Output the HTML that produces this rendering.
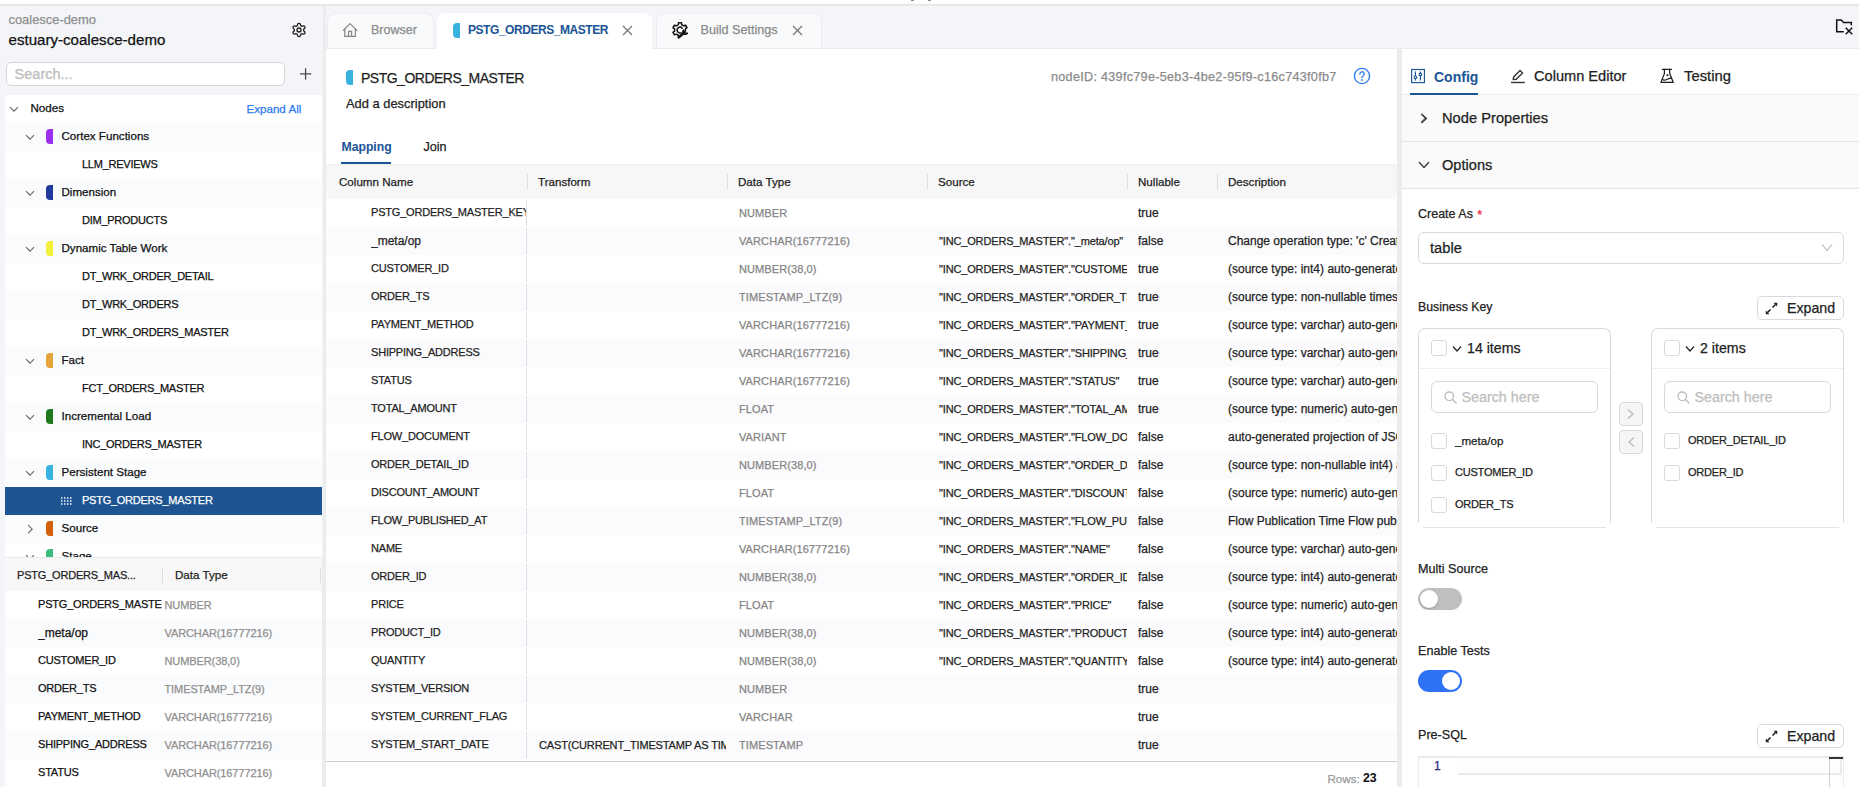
<!DOCTYPE html><html><head><meta charset="utf-8"><style>
*{box-sizing:border-box;margin:0;padding:0}
html,body{width:1859px;height:787px;overflow:hidden}
body{position:relative;background:#f4f5f8;font-family:"Liberation Sans",sans-serif;color:#1f1f1f}
.a{position:absolute}
.t{position:absolute;white-space:nowrap;line-height:1;-webkit-text-stroke:0.25px currentColor}
.clip{overflow:hidden}
svg{display:block}
</style></head><body><div class="a" style="left:0px;top:0px;width:1859px;height:4px;background:#fff"></div>
<div class="a" style="left:0px;top:4px;width:1859px;height:2px;background:linear-gradient(#dfe1e5,#eef0f3)"></div>
<div class="a" style="left:911px;top:0px;width:3px;height:1px;background:#888"></div>
<div class="a" style="left:928px;top:0px;width:3px;height:1px;background:#888"></div>
<div class="t" style="left:8.5px;top:14.08px;font-size:12.9px;color:#8e8e8e;font-weight:400;letter-spacing:0px;">coalesce-demo</div>
<div class="t" style="left:8.5px;top:32.02px;font-size:15.1px;color:#111;font-weight:400;letter-spacing:0px;">estuary-coalesce-demo</div>
<svg class="a" style="left:290.5px;top:22px" width="16" height="16" viewBox="0 0 24 24" fill="none" stroke="#1a1a1a" stroke-width="1.9" stroke-linecap="round" stroke-linejoin="round"><path d="M12.22 2h-.44a2 2 0 0 0-2 2v.18a2 2 0 0 1-1 1.73l-.43.25a2 2 0 0 1-2 0l-.15-.08a2 2 0 0 0-2.73.73l-.22.38a2 2 0 0 0 .73 2.73l.15.1a2 2 0 0 1 1 1.72v.51a2 2 0 0 1-1 1.74l-.15.09a2 2 0 0 0-.73 2.73l.22.38a2 2 0 0 0 2.73.73l.15-.08a2 2 0 0 1 2 0l.43.25a2 2 0 0 1 1 1.73V20a2 2 0 0 0 2 2h.44a2 2 0 0 0 2-2v-.18a2 2 0 0 1 1-1.73l.43-.25a2 2 0 0 1 2 0l.15.08a2 2 0 0 0 2.73-.73l.22-.39a2 2 0 0 0-.73-2.73l-.15-.08a2 2 0 0 1-1-1.74v-.5a2 2 0 0 1 1-1.74l.15-.09a2 2 0 0 0 .73-2.73l-.22-.38a2 2 0 0 0-2.73-.73l-.15.08a2 2 0 0 1-2 0l-.43-.25a2 2 0 0 1-1-1.73V4a2 2 0 0 0-2-2z"/><circle cx="12" cy="12" r="3"/></svg>
<div class="a" style="left:6px;top:62px;width:279px;height:24px;background:#fff;border:1px solid #d3d5d9;border-radius:5px"></div>
<div class="t" style="left:14.6px;top:66.73px;font-size:14.5px;color:#bcbcbc;font-weight:400;letter-spacing:0px;">Search...</div>
<svg class="a" style="left:298px;top:66px" width="15" height="15" viewBox="0 0 15 15"><path d="M7.6 2.3v11.3M2 7.9h11.3" stroke="#4a4a4a" stroke-width="1.3"/></svg>
<div class="a" style="left:5px;top:95px;width:317px;height:462px;background:#fff"></div>
<div class="a clip" style="left:5px;top:95px;width:317px;height:462px">
<div class="a" style="left:0;top:0px;width:317px;height:28px;background:#fff"></div>
<svg class="a" style="left:4px;top:10.5px" width="10" height="7" viewBox="0 0 10 7"><path d="M1 1.2L5 5.2L9 1.2" fill="none" stroke="#666" stroke-width="1.1"/></svg>
<div class="t" style="left:25.5px;top:7.38px;font-size:11.6px;color:#111;font-weight:400;letter-spacing:0px;">Nodes</div>
<div class="t" style="left:241.5px;top:7.98px;font-size:11.6px;color:#2b7af0;font-weight:400;letter-spacing:0px;">Expand All</div>
<div class="a" style="left:0;top:28px;width:317px;height:28px;background:#fafbfd"></div>
<svg class="a" style="left:19.7px;top:39.3px" width="10" height="7" viewBox="0 0 10 7"><path d="M1 1.2L5 5.2L9 1.2" fill="none" stroke="#666" stroke-width="1.1"/></svg>
<div class="a" style="left:41px;top:34px;width:7px;height:15px;background:#9d2ff2;border-radius:4px 0 0 4px"></div>
<div class="t" style="left:56.5px;top:35.38px;font-size:11.6px;color:#111;font-weight:400;letter-spacing:0px;">Cortex Functions</div>
<div class="a" style="left:0;top:56px;width:317px;height:28px;background:#fff"></div>
<div class="t" style="left:77px;top:63.89px;font-size:11px;color:#111;font-weight:400;letter-spacing:-0.25px;">LLM_REVIEWS</div>
<div class="a" style="left:0;top:84px;width:317px;height:28px;background:#fafbfd"></div>
<svg class="a" style="left:19.7px;top:95.3px" width="10" height="7" viewBox="0 0 10 7"><path d="M1 1.2L5 5.2L9 1.2" fill="none" stroke="#666" stroke-width="1.1"/></svg>
<div class="a" style="left:41px;top:90px;width:7px;height:15px;background:#1f3a9a;border-radius:4px 0 0 4px"></div>
<div class="t" style="left:56.5px;top:91.38px;font-size:11.6px;color:#111;font-weight:400;letter-spacing:0px;">Dimension</div>
<div class="a" style="left:0;top:112px;width:317px;height:28px;background:#fff"></div>
<div class="t" style="left:77px;top:119.89px;font-size:11px;color:#111;font-weight:400;letter-spacing:-0.25px;">DIM_PRODUCTS</div>
<div class="a" style="left:0;top:140px;width:317px;height:28px;background:#fafbfd"></div>
<svg class="a" style="left:19.7px;top:151.3px" width="10" height="7" viewBox="0 0 10 7"><path d="M1 1.2L5 5.2L9 1.2" fill="none" stroke="#666" stroke-width="1.1"/></svg>
<div class="a" style="left:41px;top:146px;width:7px;height:15px;background:#f2f23a;border-radius:4px 0 0 4px"></div>
<div class="t" style="left:56.5px;top:147.38px;font-size:11.6px;color:#111;font-weight:400;letter-spacing:0px;">Dynamic Table Work</div>
<div class="a" style="left:0;top:168px;width:317px;height:28px;background:#fff"></div>
<div class="t" style="left:77px;top:175.89px;font-size:11px;color:#111;font-weight:400;letter-spacing:-0.25px;">DT_WRK_ORDER_DETAIL</div>
<div class="a" style="left:0;top:196px;width:317px;height:28px;background:#fafbfd"></div>
<div class="t" style="left:77px;top:203.89px;font-size:11px;color:#111;font-weight:400;letter-spacing:-0.25px;">DT_WRK_ORDERS</div>
<div class="a" style="left:0;top:224px;width:317px;height:28px;background:#fff"></div>
<div class="t" style="left:77px;top:231.89px;font-size:11px;color:#111;font-weight:400;letter-spacing:-0.25px;">DT_WRK_ORDERS_MASTER</div>
<div class="a" style="left:0;top:252px;width:317px;height:28px;background:#fafbfd"></div>
<svg class="a" style="left:19.7px;top:263.3px" width="10" height="7" viewBox="0 0 10 7"><path d="M1 1.2L5 5.2L9 1.2" fill="none" stroke="#666" stroke-width="1.1"/></svg>
<div class="a" style="left:41px;top:258px;width:7px;height:15px;background:#e3a53a;border-radius:4px 0 0 4px"></div>
<div class="t" style="left:56.5px;top:259.38px;font-size:11.6px;color:#111;font-weight:400;letter-spacing:0px;">Fact</div>
<div class="a" style="left:0;top:280px;width:317px;height:28px;background:#fff"></div>
<div class="t" style="left:77px;top:287.89px;font-size:11px;color:#111;font-weight:400;letter-spacing:-0.25px;">FCT_ORDERS_MASTER</div>
<div class="a" style="left:0;top:308px;width:317px;height:28px;background:#fafbfd"></div>
<svg class="a" style="left:19.7px;top:319.3px" width="10" height="7" viewBox="0 0 10 7"><path d="M1 1.2L5 5.2L9 1.2" fill="none" stroke="#666" stroke-width="1.1"/></svg>
<div class="a" style="left:41px;top:314px;width:7px;height:15px;background:#1f7a1f;border-radius:4px 0 0 4px"></div>
<div class="t" style="left:56.5px;top:315.38px;font-size:11.6px;color:#111;font-weight:400;letter-spacing:0px;">Incremental Load</div>
<div class="a" style="left:0;top:336px;width:317px;height:28px;background:#fff"></div>
<div class="t" style="left:77px;top:343.89px;font-size:11px;color:#111;font-weight:400;letter-spacing:-0.25px;">INC_ORDERS_MASTER</div>
<div class="a" style="left:0;top:364px;width:317px;height:28px;background:#fafbfd"></div>
<svg class="a" style="left:19.7px;top:375.3px" width="10" height="7" viewBox="0 0 10 7"><path d="M1 1.2L5 5.2L9 1.2" fill="none" stroke="#666" stroke-width="1.1"/></svg>
<div class="a" style="left:41px;top:370px;width:7px;height:15px;background:#38b3e0;border-radius:4px 0 0 4px"></div>
<div class="t" style="left:56.5px;top:371.38px;font-size:11.6px;color:#111;font-weight:400;letter-spacing:0px;">Persistent Stage</div>
<div class="a" style="left:0;top:392px;width:317px;height:28px;background:#1f5492"></div>
<svg class="a" style="left:56px;top:401px" width="20" height="12" viewBox="0 0 20 12"><rect x="0.2" y="1" width="1.2" height="2" rx=".5" fill="#fff"/><rect x="0.2" y="4" width="1.2" height="2" rx=".5" fill="#fff"/><rect x="0.2" y="7" width="1.2" height="2" rx=".5" fill="#fff"/><rect x="3.2" y="1" width="1.2" height="2" rx=".5" fill="#fff"/><rect x="3.2" y="4" width="1.2" height="2" rx=".5" fill="#fff"/><rect x="3.2" y="7" width="1.2" height="2" rx=".5" fill="#fff"/><rect x="6.2" y="1" width="1.2" height="2" rx=".5" fill="#fff"/><rect x="6.2" y="4" width="1.2" height="2" rx=".5" fill="#fff"/><rect x="6.2" y="7" width="1.2" height="2" rx=".5" fill="#fff"/><rect x="9.2" y="1" width="1.2" height="2" rx=".5" fill="#fff"/><rect x="9.2" y="4" width="1.2" height="2" rx=".5" fill="#fff"/><rect x="9.2" y="7" width="1.2" height="2" rx=".5" fill="#fff"/></svg>
<div class="t" style="left:77px;top:399.89px;font-size:11px;color:#fff;font-weight:400;letter-spacing:-0.25px;">PSTG_ORDERS_MASTER</div>
<div class="a" style="left:0;top:420px;width:317px;height:28px;background:#fafbfd"></div>
<svg class="a" style="left:21.5px;top:429px" width="7" height="11" viewBox="0 0 7 11"><path d="M1.2 1.2L5.2 5.2L1.2 9.2" fill="none" stroke="#666" stroke-width="1.1"/></svg>
<div class="a" style="left:41px;top:426px;width:7px;height:15px;background:#d4600a;border-radius:4px 0 0 4px"></div>
<div class="t" style="left:56.5px;top:427.38px;font-size:11.6px;color:#111;font-weight:400;letter-spacing:0px;">Source</div>
<div class="a" style="left:0;top:448px;width:317px;height:28px;background:#fff"></div>
<svg class="a" style="left:19.7px;top:459.3px" width="10" height="7" viewBox="0 0 10 7"><path d="M1 1.2L5 5.2L9 1.2" fill="none" stroke="#666" stroke-width="1.1"/></svg>
<div class="a" style="left:41px;top:454px;width:7px;height:15px;background:#3dba7c;border-radius:4px 0 0 4px"></div>
<div class="t" style="left:56.5px;top:455.38px;font-size:11.6px;color:#111;font-weight:400;letter-spacing:0px;">Stage</div>
</div>
<div class="a" style="left:5px;top:557px;width:317px;height:230px;background:#fff"></div>
<div class="a" style="left:5px;top:557px;width:317px;height:1px;background:#e9eaed"></div>
<div class="a" style="left:5px;top:558px;width:317px;height:33px;background:#f7f7f8"></div>
<div class="a" style="left:162px;top:568px;width:1px;height:15px;background:#dcdcdc"></div>
<div class="a" style="left:320px;top:568px;width:1px;height:15px;background:#dcdcdc"></div>
<div class="t" style="left:17px;top:569.99px;font-size:11px;color:#1f1f1f;font-weight:400;letter-spacing:-0.2px;">PSTG_ORDERS_MAS...</div>
<div class="t" style="left:175px;top:569.48px;font-size:11.6px;color:#1f1f1f;font-weight:400;letter-spacing:0px;">Data Type</div>
<div class="a" style="left:322px;top:557px;width:5px;height:230px;background:#ebebeb"></div>
<div class="a clip" style="left:38px;top:591px;width:124px;height:28px">
<div class="t" style="left:0px;top:7.89px;font-size:11px;color:#111;font-weight:400;letter-spacing:-0.2px;">PSTG_ORDERS_MASTER_KEY</div>
</div>
<div class="t" style="left:164.5px;top:599.69px;font-size:11px;color:#8f8f8f;font-weight:400;letter-spacing:-0.1px;">NUMBER</div>
<div class="a" style="left:5px;top:619px;width:317px;height:28px;background:#fafbfd"></div>
<div class="a clip" style="left:38px;top:619px;width:124px;height:28px">
<div class="t" style="left:0px;top:7.84px;font-size:12px;color:#111;font-weight:400;letter-spacing:0px;">_meta/op</div>
</div>
<div class="t" style="left:164.5px;top:627.69px;font-size:11px;color:#8f8f8f;font-weight:400;letter-spacing:-0.1px;">VARCHAR(16777216)</div>
<div class="a clip" style="left:38px;top:647px;width:124px;height:28px">
<div class="t" style="left:0px;top:7.89px;font-size:11px;color:#111;font-weight:400;letter-spacing:-0.2px;">CUSTOMER_ID</div>
</div>
<div class="t" style="left:164.5px;top:655.69px;font-size:11px;color:#8f8f8f;font-weight:400;letter-spacing:-0.1px;">NUMBER(38,0)</div>
<div class="a" style="left:5px;top:675px;width:317px;height:28px;background:#fafbfd"></div>
<div class="a clip" style="left:38px;top:675px;width:124px;height:28px">
<div class="t" style="left:0px;top:7.89px;font-size:11px;color:#111;font-weight:400;letter-spacing:-0.2px;">ORDER_TS</div>
</div>
<div class="t" style="left:164.5px;top:683.69px;font-size:11px;color:#8f8f8f;font-weight:400;letter-spacing:-0.1px;">TIMESTAMP_LTZ(9)</div>
<div class="a clip" style="left:38px;top:703px;width:124px;height:28px">
<div class="t" style="left:0px;top:7.89px;font-size:11px;color:#111;font-weight:400;letter-spacing:-0.2px;">PAYMENT_METHOD</div>
</div>
<div class="t" style="left:164.5px;top:711.69px;font-size:11px;color:#8f8f8f;font-weight:400;letter-spacing:-0.1px;">VARCHAR(16777216)</div>
<div class="a" style="left:5px;top:731px;width:317px;height:28px;background:#fafbfd"></div>
<div class="a clip" style="left:38px;top:731px;width:124px;height:28px">
<div class="t" style="left:0px;top:7.89px;font-size:11px;color:#111;font-weight:400;letter-spacing:-0.2px;">SHIPPING_ADDRESS</div>
</div>
<div class="t" style="left:164.5px;top:739.69px;font-size:11px;color:#8f8f8f;font-weight:400;letter-spacing:-0.1px;">VARCHAR(16777216)</div>
<div class="a clip" style="left:38px;top:759px;width:124px;height:28px">
<div class="t" style="left:0px;top:7.89px;font-size:11px;color:#111;font-weight:400;letter-spacing:-0.2px;">STATUS</div>
</div>
<div class="t" style="left:164.5px;top:767.69px;font-size:11px;color:#8f8f8f;font-weight:400;letter-spacing:-0.1px;">VARCHAR(16777216)</div>
<div class="a" style="left:323px;top:6px;width:3px;height:781px;background:#ececec"></div>
<div class="a" style="left:326px;top:48px;width:1533px;height:1px;background:#ebebeb"></div>
<div class="a" style="left:327px;top:13px;width:107px;height:35px;background:#f9fafb;border:1px solid #eceef1;border-bottom:none;border-radius:8px 8px 0 0"></div>
<svg class="a" style="left:335px;top:15px" width="30" height="30" viewBox="0 0 30 30" fill="none" stroke="#8a8a8a" stroke-width="1.3" stroke-linecap="round" stroke-linejoin="round"><path d="M8.3 15.4L15.1 8.6L21.9 15.4"/><path d="M9.8 14v7.4h10.6V14"/><path d="M13.6 21.4v-5h3v5"/></svg>
<div class="t" style="left:371px;top:24.42px;font-size:12.5px;color:#8a8a8a;font-weight:400;letter-spacing:0px;">Browser</div>
<div class="a" style="left:437px;top:13px;width:215px;height:37px;background:#fff;border-radius:8px 8px 0 0"></div>
<div class="a" style="left:453px;top:23px;width:7px;height:15px;background:#38b3e0;border-radius:4px 0 0 4px"></div>
<div class="t" style="left:468px;top:24.04px;font-size:12px;color:#1b5596;font-weight:700;letter-spacing:-0.45px;-webkit-text-stroke:0.05px currentColor;">PSTG_ORDERS_MASTER</div>
<svg class="a" style="left:622px;top:25px" width="11" height="11" viewBox="0 0 11 11"><path d="M1 1l9 9M10 1l-9 9" stroke="#777" stroke-width="1.3"/></svg>
<div class="a" style="left:656px;top:13px;width:166px;height:35px;background:#f9fafb;border:1px solid #eceef1;border-bottom:none;border-radius:8px 8px 0 0"></div>
<svg class="a" style="left:665px;top:15px" width="30" height="30" viewBox="0 0 30 30" fill="none" stroke="#111" stroke-linecap="round" stroke-linejoin="round"><path d="M13.27 9.78L13.53 7.75L16.47 7.75L16.73 9.78L17.75 10.24L18.66 10.89L20.55 10.10L22.02 12.65L20.39 13.89L20.50 15.00L20.39 16.11M13.53 22.25L13.27 20.22L12.25 19.76L11.34 19.11L9.45 19.90L7.98 17.35L9.61 16.11L9.50 15.00L9.61 13.89L7.98 12.65L9.45 10.10L11.34 10.89L12.25 10.24" stroke-width="1.5"/><path d="M17.2 13.2a2.9 2.9 0 1 0-1.2 4.6" stroke-width="1.4"/><path d="M13.8 22.3L19.6 17.2" stroke-width="2.6"/><path d="M18.6 15.2a2.3 2.3 0 0 0 3.6 2.9" stroke-width="1.8"/></svg>
<div class="t" style="left:700.5px;top:24.33px;font-size:12.6px;color:#8a8a8a;font-weight:400;letter-spacing:0px;">Build Settings</div>
<svg class="a" style="left:792px;top:25px" width="11" height="11" viewBox="0 0 11 11"><path d="M1 1l9 9M10 1l-9 9" stroke="#777" stroke-width="1.3"/></svg>
<svg class="a" style="left:1835px;top:17px" width="19" height="19" viewBox="0 0 19 19" fill="none" stroke="#111" stroke-width="1.5"><path d="M8.8 14.8H1.7V2.9H6.2L8.6 5.5H16.3V8.3"/><path d="M10.7 10.7L17.2 17.2M17.2 10.7L10.7 17.2"/></svg>
<div class="a" style="left:326px;top:49px;width:1071px;height:738px;background:#fff"></div>
<div class="a" style="left:346px;top:70px;width:7px;height:15px;background:#38b3e0;border-radius:4px 0 0 4px"></div>
<div class="t" style="left:361px;top:71.35px;font-size:14px;color:#1f1f1f;font-weight:400;letter-spacing:-0.5px;">PSTG_ORDERS_MASTER</div>
<div class="t" style="left:346px;top:98.38px;font-size:12.9px;color:#222;font-weight:400;letter-spacing:0px;">Add a description</div>
<div class="t" style="left:1051px;top:71.33px;font-size:12.6px;color:#8a8a8a;font-weight:400;letter-spacing:0.3px;">nodeID: 439fc79e-5eb3-4be2-95f9-c16c743f0fb7</div>
<svg class="a" style="left:1353px;top:67px" width="18" height="18" viewBox="0 0 18 18"><circle cx="9" cy="9" r="7.6" fill="none" stroke="#2e7bf2" stroke-width="1.4"/><path d="M6.8 7a2.2 2.2 0 1 1 3.2 2c-.7.4-1 .8-1 1.6" fill="none" stroke="#2e7bf2" stroke-width="1.4" stroke-linecap="round"/><circle cx="9" cy="13" r=".9" fill="#2e7bf2"/></svg>
<div class="t" style="left:341.5px;top:141.17px;font-size:12.2px;color:#1b5596;font-weight:700;letter-spacing:0px;-webkit-text-stroke:0.05px currentColor;">Mapping</div>
<div class="t" style="left:423.5px;top:140.83px;font-size:12.6px;color:#222;font-weight:400;letter-spacing:0px;">Join</div>
<div class="a" style="left:341px;top:162px;width:50px;height:3px;background:#1b5596"></div>
<div class="a" style="left:326px;top:165px;width:1071px;height:34px;background:#f7f7f8"></div>
<div class="a" style="left:326px;top:164px;width:1071px;height:1px;background:#efefef"></div>
<div class="t" style="left:339px;top:175.98px;font-size:11.6px;color:#1f1f1f;font-weight:400;letter-spacing:0px;">Column Name</div>
<div class="t" style="left:538px;top:175.98px;font-size:11.6px;color:#1f1f1f;font-weight:400;letter-spacing:0px;">Transform</div>
<div class="t" style="left:738px;top:175.98px;font-size:11.6px;color:#1f1f1f;font-weight:400;letter-spacing:0px;">Data Type</div>
<div class="t" style="left:938px;top:175.98px;font-size:11.6px;color:#1f1f1f;font-weight:400;letter-spacing:0px;">Source</div>
<div class="t" style="left:1138px;top:175.98px;font-size:11.6px;color:#1f1f1f;font-weight:400;letter-spacing:0px;">Nullable</div>
<div class="t" style="left:1228px;top:175.98px;font-size:11.6px;color:#1f1f1f;font-weight:400;letter-spacing:0px;">Description</div>
<div class="a" style="left:527px;top:174px;width:1px;height:16px;background:#dedede"></div>
<div class="a" style="left:727px;top:174px;width:1px;height:16px;background:#dedede"></div>
<div class="a" style="left:927px;top:174px;width:1px;height:16px;background:#dedede"></div>
<div class="a" style="left:1127px;top:174px;width:1px;height:16px;background:#dedede"></div>
<div class="a" style="left:1217px;top:174px;width:1px;height:16px;background:#dedede"></div>
<div class="a" style="left:526px;top:200px;width:1px;height:26px;background:#dcdfe3"></div>
<div class="a clip" style="left:371px;top:199px;width:155px;height:28px">
<div class="t" style="left:0px;top:7.89px;font-size:11px;color:#1f1f1f;font-weight:400;letter-spacing:-0.2px;">PSTG_ORDERS_MASTER_KEY</div>
</div>
<div class="a clip" style="left:739px;top:199px;width:188px;height:28px">
<div class="t" style="left:0px;top:8.89px;font-size:11px;color:#858585;font-weight:400;letter-spacing:0.1px;">NUMBER</div>
</div>
<div class="a clip" style="left:1138px;top:199px;width:78px;height:28px">
<div class="t" style="left:0px;top:8.04px;font-size:12px;color:#1f1f1f;font-weight:400;letter-spacing:0px;">true</div>
</div>
<div class="a" style="left:326px;top:227px;width:1071px;height:28px;background:#fbfbfd"></div>
<div class="a" style="left:526px;top:228px;width:1px;height:26px;background:#dcdfe3"></div>
<div class="a clip" style="left:371px;top:227px;width:155px;height:28px">
<div class="t" style="left:0px;top:8.04px;font-size:12px;color:#1f1f1f;font-weight:400;letter-spacing:0px;">_meta/op</div>
</div>
<div class="a clip" style="left:739px;top:227px;width:188px;height:28px">
<div class="t" style="left:0px;top:8.89px;font-size:11px;color:#858585;font-weight:400;letter-spacing:0.1px;">VARCHAR(16777216)</div>
</div>
<div class="a clip" style="left:939px;top:227px;width:188px;height:28px">
<div class="t" style="left:0px;top:8.79px;font-size:11px;color:#1f1f1f;font-weight:400;letter-spacing:-0.15px;">&quot;INC_ORDERS_MASTER&quot;.&quot;_meta/op&quot;</div>
</div>
<div class="a clip" style="left:1138px;top:227px;width:78px;height:28px">
<div class="t" style="left:0px;top:8.04px;font-size:12px;color:#1f1f1f;font-weight:400;letter-spacing:0px;">false</div>
</div>
<div class="a clip" style="left:1228px;top:227px;width:169px;height:28px">
<div class="t" style="left:0px;top:8.04px;font-size:12px;color:#1f1f1f;font-weight:400;letter-spacing:0px;">Change operation type: &#x27;c&#x27; Create, &#x27;u&#x27; Update</div>
</div>
<div class="a" style="left:526px;top:256px;width:1px;height:26px;background:#dcdfe3"></div>
<div class="a clip" style="left:371px;top:255px;width:155px;height:28px">
<div class="t" style="left:0px;top:7.89px;font-size:11px;color:#1f1f1f;font-weight:400;letter-spacing:-0.2px;">CUSTOMER_ID</div>
</div>
<div class="a clip" style="left:739px;top:255px;width:188px;height:28px">
<div class="t" style="left:0px;top:8.89px;font-size:11px;color:#858585;font-weight:400;letter-spacing:0.1px;">NUMBER(38,0)</div>
</div>
<div class="a clip" style="left:939px;top:255px;width:188px;height:28px">
<div class="t" style="left:0px;top:8.79px;font-size:11px;color:#1f1f1f;font-weight:400;letter-spacing:-0.15px;">&quot;INC_ORDERS_MASTER&quot;.&quot;CUSTOMER_ID&quot;</div>
</div>
<div class="a clip" style="left:1138px;top:255px;width:78px;height:28px">
<div class="t" style="left:0px;top:8.04px;font-size:12px;color:#1f1f1f;font-weight:400;letter-spacing:0px;">true</div>
</div>
<div class="a clip" style="left:1228px;top:255px;width:169px;height:28px">
<div class="t" style="left:0px;top:8.04px;font-size:12px;color:#1f1f1f;font-weight:400;letter-spacing:0px;">(source type: int4) auto-generated projection</div>
</div>
<div class="a" style="left:326px;top:283px;width:1071px;height:28px;background:#fbfbfd"></div>
<div class="a" style="left:526px;top:284px;width:1px;height:26px;background:#dcdfe3"></div>
<div class="a clip" style="left:371px;top:283px;width:155px;height:28px">
<div class="t" style="left:0px;top:7.89px;font-size:11px;color:#1f1f1f;font-weight:400;letter-spacing:-0.2px;">ORDER_TS</div>
</div>
<div class="a clip" style="left:739px;top:283px;width:188px;height:28px">
<div class="t" style="left:0px;top:8.89px;font-size:11px;color:#858585;font-weight:400;letter-spacing:0.1px;">TIMESTAMP_LTZ(9)</div>
</div>
<div class="a clip" style="left:939px;top:283px;width:188px;height:28px">
<div class="t" style="left:0px;top:8.79px;font-size:11px;color:#1f1f1f;font-weight:400;letter-spacing:-0.15px;">&quot;INC_ORDERS_MASTER&quot;.&quot;ORDER_TS&quot;</div>
</div>
<div class="a clip" style="left:1138px;top:283px;width:78px;height:28px">
<div class="t" style="left:0px;top:8.04px;font-size:12px;color:#1f1f1f;font-weight:400;letter-spacing:0px;">true</div>
</div>
<div class="a clip" style="left:1228px;top:283px;width:169px;height:28px">
<div class="t" style="left:0px;top:8.04px;font-size:12px;color:#1f1f1f;font-weight:400;letter-spacing:0px;">(source type: non-nullable timestamptz)</div>
</div>
<div class="a" style="left:526px;top:312px;width:1px;height:26px;background:#dcdfe3"></div>
<div class="a clip" style="left:371px;top:311px;width:155px;height:28px">
<div class="t" style="left:0px;top:7.89px;font-size:11px;color:#1f1f1f;font-weight:400;letter-spacing:-0.2px;">PAYMENT_METHOD</div>
</div>
<div class="a clip" style="left:739px;top:311px;width:188px;height:28px">
<div class="t" style="left:0px;top:8.89px;font-size:11px;color:#858585;font-weight:400;letter-spacing:0.1px;">VARCHAR(16777216)</div>
</div>
<div class="a clip" style="left:939px;top:311px;width:188px;height:28px">
<div class="t" style="left:0px;top:8.79px;font-size:11px;color:#1f1f1f;font-weight:400;letter-spacing:-0.15px;">&quot;INC_ORDERS_MASTER&quot;.&quot;PAYMENT_METHOD&quot;</div>
</div>
<div class="a clip" style="left:1138px;top:311px;width:78px;height:28px">
<div class="t" style="left:0px;top:8.04px;font-size:12px;color:#1f1f1f;font-weight:400;letter-spacing:0px;">true</div>
</div>
<div class="a clip" style="left:1228px;top:311px;width:169px;height:28px">
<div class="t" style="left:0px;top:8.04px;font-size:12px;color:#1f1f1f;font-weight:400;letter-spacing:0px;">(source type: varchar) auto-generated</div>
</div>
<div class="a" style="left:326px;top:339px;width:1071px;height:28px;background:#fbfbfd"></div>
<div class="a" style="left:526px;top:340px;width:1px;height:26px;background:#dcdfe3"></div>
<div class="a clip" style="left:371px;top:339px;width:155px;height:28px">
<div class="t" style="left:0px;top:7.89px;font-size:11px;color:#1f1f1f;font-weight:400;letter-spacing:-0.2px;">SHIPPING_ADDRESS</div>
</div>
<div class="a clip" style="left:739px;top:339px;width:188px;height:28px">
<div class="t" style="left:0px;top:8.89px;font-size:11px;color:#858585;font-weight:400;letter-spacing:0.1px;">VARCHAR(16777216)</div>
</div>
<div class="a clip" style="left:939px;top:339px;width:188px;height:28px">
<div class="t" style="left:0px;top:8.79px;font-size:11px;color:#1f1f1f;font-weight:400;letter-spacing:-0.15px;">&quot;INC_ORDERS_MASTER&quot;.&quot;SHIPPING_ADDRESS&quot;</div>
</div>
<div class="a clip" style="left:1138px;top:339px;width:78px;height:28px">
<div class="t" style="left:0px;top:8.04px;font-size:12px;color:#1f1f1f;font-weight:400;letter-spacing:0px;">true</div>
</div>
<div class="a clip" style="left:1228px;top:339px;width:169px;height:28px">
<div class="t" style="left:0px;top:8.04px;font-size:12px;color:#1f1f1f;font-weight:400;letter-spacing:0px;">(source type: varchar) auto-generated</div>
</div>
<div class="a" style="left:526px;top:368px;width:1px;height:26px;background:#dcdfe3"></div>
<div class="a clip" style="left:371px;top:367px;width:155px;height:28px">
<div class="t" style="left:0px;top:7.89px;font-size:11px;color:#1f1f1f;font-weight:400;letter-spacing:-0.2px;">STATUS</div>
</div>
<div class="a clip" style="left:739px;top:367px;width:188px;height:28px">
<div class="t" style="left:0px;top:8.89px;font-size:11px;color:#858585;font-weight:400;letter-spacing:0.1px;">VARCHAR(16777216)</div>
</div>
<div class="a clip" style="left:939px;top:367px;width:188px;height:28px">
<div class="t" style="left:0px;top:8.79px;font-size:11px;color:#1f1f1f;font-weight:400;letter-spacing:-0.15px;">&quot;INC_ORDERS_MASTER&quot;.&quot;STATUS&quot;</div>
</div>
<div class="a clip" style="left:1138px;top:367px;width:78px;height:28px">
<div class="t" style="left:0px;top:8.04px;font-size:12px;color:#1f1f1f;font-weight:400;letter-spacing:0px;">true</div>
</div>
<div class="a clip" style="left:1228px;top:367px;width:169px;height:28px">
<div class="t" style="left:0px;top:8.04px;font-size:12px;color:#1f1f1f;font-weight:400;letter-spacing:0px;">(source type: varchar) auto-generated</div>
</div>
<div class="a" style="left:326px;top:395px;width:1071px;height:28px;background:#fbfbfd"></div>
<div class="a" style="left:526px;top:396px;width:1px;height:26px;background:#dcdfe3"></div>
<div class="a clip" style="left:371px;top:395px;width:155px;height:28px">
<div class="t" style="left:0px;top:7.89px;font-size:11px;color:#1f1f1f;font-weight:400;letter-spacing:-0.2px;">TOTAL_AMOUNT</div>
</div>
<div class="a clip" style="left:739px;top:395px;width:188px;height:28px">
<div class="t" style="left:0px;top:8.89px;font-size:11px;color:#858585;font-weight:400;letter-spacing:0.1px;">FLOAT</div>
</div>
<div class="a clip" style="left:939px;top:395px;width:188px;height:28px">
<div class="t" style="left:0px;top:8.79px;font-size:11px;color:#1f1f1f;font-weight:400;letter-spacing:-0.15px;">&quot;INC_ORDERS_MASTER&quot;.&quot;TOTAL_AMOUNT&quot;</div>
</div>
<div class="a clip" style="left:1138px;top:395px;width:78px;height:28px">
<div class="t" style="left:0px;top:8.04px;font-size:12px;color:#1f1f1f;font-weight:400;letter-spacing:0px;">true</div>
</div>
<div class="a clip" style="left:1228px;top:395px;width:169px;height:28px">
<div class="t" style="left:0px;top:8.04px;font-size:12px;color:#1f1f1f;font-weight:400;letter-spacing:0px;">(source type: numeric) auto-generated</div>
</div>
<div class="a" style="left:526px;top:424px;width:1px;height:26px;background:#dcdfe3"></div>
<div class="a clip" style="left:371px;top:423px;width:155px;height:28px">
<div class="t" style="left:0px;top:7.89px;font-size:11px;color:#1f1f1f;font-weight:400;letter-spacing:-0.2px;">FLOW_DOCUMENT</div>
</div>
<div class="a clip" style="left:739px;top:423px;width:188px;height:28px">
<div class="t" style="left:0px;top:8.89px;font-size:11px;color:#858585;font-weight:400;letter-spacing:0.1px;">VARIANT</div>
</div>
<div class="a clip" style="left:939px;top:423px;width:188px;height:28px">
<div class="t" style="left:0px;top:8.79px;font-size:11px;color:#1f1f1f;font-weight:400;letter-spacing:-0.15px;">&quot;INC_ORDERS_MASTER&quot;.&quot;FLOW_DOCUMENT&quot;</div>
</div>
<div class="a clip" style="left:1138px;top:423px;width:78px;height:28px">
<div class="t" style="left:0px;top:8.04px;font-size:12px;color:#1f1f1f;font-weight:400;letter-spacing:0px;">false</div>
</div>
<div class="a clip" style="left:1228px;top:423px;width:169px;height:28px">
<div class="t" style="left:0px;top:8.04px;font-size:12px;color:#1f1f1f;font-weight:400;letter-spacing:0px;">auto-generated projection of JSON document</div>
</div>
<div class="a" style="left:326px;top:451px;width:1071px;height:28px;background:#fbfbfd"></div>
<div class="a" style="left:526px;top:452px;width:1px;height:26px;background:#dcdfe3"></div>
<div class="a clip" style="left:371px;top:451px;width:155px;height:28px">
<div class="t" style="left:0px;top:7.89px;font-size:11px;color:#1f1f1f;font-weight:400;letter-spacing:-0.2px;">ORDER_DETAIL_ID</div>
</div>
<div class="a clip" style="left:739px;top:451px;width:188px;height:28px">
<div class="t" style="left:0px;top:8.89px;font-size:11px;color:#858585;font-weight:400;letter-spacing:0.1px;">NUMBER(38,0)</div>
</div>
<div class="a clip" style="left:939px;top:451px;width:188px;height:28px">
<div class="t" style="left:0px;top:8.79px;font-size:11px;color:#1f1f1f;font-weight:400;letter-spacing:-0.15px;">&quot;INC_ORDERS_MASTER&quot;.&quot;ORDER_DETAIL_ID&quot;</div>
</div>
<div class="a clip" style="left:1138px;top:451px;width:78px;height:28px">
<div class="t" style="left:0px;top:8.04px;font-size:12px;color:#1f1f1f;font-weight:400;letter-spacing:0px;">false</div>
</div>
<div class="a clip" style="left:1228px;top:451px;width:169px;height:28px">
<div class="t" style="left:0px;top:8.04px;font-size:12px;color:#1f1f1f;font-weight:400;letter-spacing:0px;">(source type: non-nullable int4) auto-generated</div>
</div>
<div class="a" style="left:526px;top:480px;width:1px;height:26px;background:#dcdfe3"></div>
<div class="a clip" style="left:371px;top:479px;width:155px;height:28px">
<div class="t" style="left:0px;top:7.89px;font-size:11px;color:#1f1f1f;font-weight:400;letter-spacing:-0.2px;">DISCOUNT_AMOUNT</div>
</div>
<div class="a clip" style="left:739px;top:479px;width:188px;height:28px">
<div class="t" style="left:0px;top:8.89px;font-size:11px;color:#858585;font-weight:400;letter-spacing:0.1px;">FLOAT</div>
</div>
<div class="a clip" style="left:939px;top:479px;width:188px;height:28px">
<div class="t" style="left:0px;top:8.79px;font-size:11px;color:#1f1f1f;font-weight:400;letter-spacing:-0.15px;">&quot;INC_ORDERS_MASTER&quot;.&quot;DISCOUNT_AMOUNT&quot;</div>
</div>
<div class="a clip" style="left:1138px;top:479px;width:78px;height:28px">
<div class="t" style="left:0px;top:8.04px;font-size:12px;color:#1f1f1f;font-weight:400;letter-spacing:0px;">false</div>
</div>
<div class="a clip" style="left:1228px;top:479px;width:169px;height:28px">
<div class="t" style="left:0px;top:8.04px;font-size:12px;color:#1f1f1f;font-weight:400;letter-spacing:0px;">(source type: numeric) auto-generated</div>
</div>
<div class="a" style="left:326px;top:507px;width:1071px;height:28px;background:#fbfbfd"></div>
<div class="a" style="left:526px;top:508px;width:1px;height:26px;background:#dcdfe3"></div>
<div class="a clip" style="left:371px;top:507px;width:155px;height:28px">
<div class="t" style="left:0px;top:7.89px;font-size:11px;color:#1f1f1f;font-weight:400;letter-spacing:-0.2px;">FLOW_PUBLISHED_AT</div>
</div>
<div class="a clip" style="left:739px;top:507px;width:188px;height:28px">
<div class="t" style="left:0px;top:8.89px;font-size:11px;color:#858585;font-weight:400;letter-spacing:0.1px;">TIMESTAMP_LTZ(9)</div>
</div>
<div class="a clip" style="left:939px;top:507px;width:188px;height:28px">
<div class="t" style="left:0px;top:8.79px;font-size:11px;color:#1f1f1f;font-weight:400;letter-spacing:-0.15px;">&quot;INC_ORDERS_MASTER&quot;.&quot;FLOW_PUBLISHED_AT&quot;</div>
</div>
<div class="a clip" style="left:1138px;top:507px;width:78px;height:28px">
<div class="t" style="left:0px;top:8.04px;font-size:12px;color:#1f1f1f;font-weight:400;letter-spacing:0px;">false</div>
</div>
<div class="a clip" style="left:1228px;top:507px;width:169px;height:28px">
<div class="t" style="left:0px;top:8.04px;font-size:12px;color:#1f1f1f;font-weight:400;letter-spacing:0px;">Flow Publication Time Flow publication time</div>
</div>
<div class="a" style="left:526px;top:536px;width:1px;height:26px;background:#dcdfe3"></div>
<div class="a clip" style="left:371px;top:535px;width:155px;height:28px">
<div class="t" style="left:0px;top:7.89px;font-size:11px;color:#1f1f1f;font-weight:400;letter-spacing:-0.2px;">NAME</div>
</div>
<div class="a clip" style="left:739px;top:535px;width:188px;height:28px">
<div class="t" style="left:0px;top:8.89px;font-size:11px;color:#858585;font-weight:400;letter-spacing:0.1px;">VARCHAR(16777216)</div>
</div>
<div class="a clip" style="left:939px;top:535px;width:188px;height:28px">
<div class="t" style="left:0px;top:8.79px;font-size:11px;color:#1f1f1f;font-weight:400;letter-spacing:-0.15px;">&quot;INC_ORDERS_MASTER&quot;.&quot;NAME&quot;</div>
</div>
<div class="a clip" style="left:1138px;top:535px;width:78px;height:28px">
<div class="t" style="left:0px;top:8.04px;font-size:12px;color:#1f1f1f;font-weight:400;letter-spacing:0px;">false</div>
</div>
<div class="a clip" style="left:1228px;top:535px;width:169px;height:28px">
<div class="t" style="left:0px;top:8.04px;font-size:12px;color:#1f1f1f;font-weight:400;letter-spacing:0px;">(source type: varchar) auto-generated</div>
</div>
<div class="a" style="left:326px;top:563px;width:1071px;height:28px;background:#fbfbfd"></div>
<div class="a" style="left:526px;top:564px;width:1px;height:26px;background:#dcdfe3"></div>
<div class="a clip" style="left:371px;top:563px;width:155px;height:28px">
<div class="t" style="left:0px;top:7.89px;font-size:11px;color:#1f1f1f;font-weight:400;letter-spacing:-0.2px;">ORDER_ID</div>
</div>
<div class="a clip" style="left:739px;top:563px;width:188px;height:28px">
<div class="t" style="left:0px;top:8.89px;font-size:11px;color:#858585;font-weight:400;letter-spacing:0.1px;">NUMBER(38,0)</div>
</div>
<div class="a clip" style="left:939px;top:563px;width:188px;height:28px">
<div class="t" style="left:0px;top:8.79px;font-size:11px;color:#1f1f1f;font-weight:400;letter-spacing:-0.15px;">&quot;INC_ORDERS_MASTER&quot;.&quot;ORDER_ID&quot;</div>
</div>
<div class="a clip" style="left:1138px;top:563px;width:78px;height:28px">
<div class="t" style="left:0px;top:8.04px;font-size:12px;color:#1f1f1f;font-weight:400;letter-spacing:0px;">false</div>
</div>
<div class="a clip" style="left:1228px;top:563px;width:169px;height:28px">
<div class="t" style="left:0px;top:8.04px;font-size:12px;color:#1f1f1f;font-weight:400;letter-spacing:0px;">(source type: int4) auto-generated</div>
</div>
<div class="a" style="left:526px;top:592px;width:1px;height:26px;background:#dcdfe3"></div>
<div class="a clip" style="left:371px;top:591px;width:155px;height:28px">
<div class="t" style="left:0px;top:7.89px;font-size:11px;color:#1f1f1f;font-weight:400;letter-spacing:-0.2px;">PRICE</div>
</div>
<div class="a clip" style="left:739px;top:591px;width:188px;height:28px">
<div class="t" style="left:0px;top:8.89px;font-size:11px;color:#858585;font-weight:400;letter-spacing:0.1px;">FLOAT</div>
</div>
<div class="a clip" style="left:939px;top:591px;width:188px;height:28px">
<div class="t" style="left:0px;top:8.79px;font-size:11px;color:#1f1f1f;font-weight:400;letter-spacing:-0.15px;">&quot;INC_ORDERS_MASTER&quot;.&quot;PRICE&quot;</div>
</div>
<div class="a clip" style="left:1138px;top:591px;width:78px;height:28px">
<div class="t" style="left:0px;top:8.04px;font-size:12px;color:#1f1f1f;font-weight:400;letter-spacing:0px;">false</div>
</div>
<div class="a clip" style="left:1228px;top:591px;width:169px;height:28px">
<div class="t" style="left:0px;top:8.04px;font-size:12px;color:#1f1f1f;font-weight:400;letter-spacing:0px;">(source type: numeric) auto-generated</div>
</div>
<div class="a" style="left:326px;top:619px;width:1071px;height:28px;background:#fbfbfd"></div>
<div class="a" style="left:526px;top:620px;width:1px;height:26px;background:#dcdfe3"></div>
<div class="a clip" style="left:371px;top:619px;width:155px;height:28px">
<div class="t" style="left:0px;top:7.89px;font-size:11px;color:#1f1f1f;font-weight:400;letter-spacing:-0.2px;">PRODUCT_ID</div>
</div>
<div class="a clip" style="left:739px;top:619px;width:188px;height:28px">
<div class="t" style="left:0px;top:8.89px;font-size:11px;color:#858585;font-weight:400;letter-spacing:0.1px;">NUMBER(38,0)</div>
</div>
<div class="a clip" style="left:939px;top:619px;width:188px;height:28px">
<div class="t" style="left:0px;top:8.79px;font-size:11px;color:#1f1f1f;font-weight:400;letter-spacing:-0.15px;">&quot;INC_ORDERS_MASTER&quot;.&quot;PRODUCT_ID&quot;</div>
</div>
<div class="a clip" style="left:1138px;top:619px;width:78px;height:28px">
<div class="t" style="left:0px;top:8.04px;font-size:12px;color:#1f1f1f;font-weight:400;letter-spacing:0px;">false</div>
</div>
<div class="a clip" style="left:1228px;top:619px;width:169px;height:28px">
<div class="t" style="left:0px;top:8.04px;font-size:12px;color:#1f1f1f;font-weight:400;letter-spacing:0px;">(source type: int4) auto-generated</div>
</div>
<div class="a" style="left:526px;top:648px;width:1px;height:26px;background:#dcdfe3"></div>
<div class="a clip" style="left:371px;top:647px;width:155px;height:28px">
<div class="t" style="left:0px;top:7.89px;font-size:11px;color:#1f1f1f;font-weight:400;letter-spacing:-0.2px;">QUANTITY</div>
</div>
<div class="a clip" style="left:739px;top:647px;width:188px;height:28px">
<div class="t" style="left:0px;top:8.89px;font-size:11px;color:#858585;font-weight:400;letter-spacing:0.1px;">NUMBER(38,0)</div>
</div>
<div class="a clip" style="left:939px;top:647px;width:188px;height:28px">
<div class="t" style="left:0px;top:8.79px;font-size:11px;color:#1f1f1f;font-weight:400;letter-spacing:-0.15px;">&quot;INC_ORDERS_MASTER&quot;.&quot;QUANTITY&quot;</div>
</div>
<div class="a clip" style="left:1138px;top:647px;width:78px;height:28px">
<div class="t" style="left:0px;top:8.04px;font-size:12px;color:#1f1f1f;font-weight:400;letter-spacing:0px;">false</div>
</div>
<div class="a clip" style="left:1228px;top:647px;width:169px;height:28px">
<div class="t" style="left:0px;top:8.04px;font-size:12px;color:#1f1f1f;font-weight:400;letter-spacing:0px;">(source type: int4) auto-generated</div>
</div>
<div class="a" style="left:326px;top:675px;width:1071px;height:28px;background:#fbfbfd"></div>
<div class="a" style="left:526px;top:676px;width:1px;height:26px;background:#dcdfe3"></div>
<div class="a clip" style="left:371px;top:675px;width:155px;height:28px">
<div class="t" style="left:0px;top:7.89px;font-size:11px;color:#1f1f1f;font-weight:400;letter-spacing:-0.2px;">SYSTEM_VERSION</div>
</div>
<div class="a clip" style="left:739px;top:675px;width:188px;height:28px">
<div class="t" style="left:0px;top:8.89px;font-size:11px;color:#858585;font-weight:400;letter-spacing:0.1px;">NUMBER</div>
</div>
<div class="a clip" style="left:1138px;top:675px;width:78px;height:28px">
<div class="t" style="left:0px;top:8.04px;font-size:12px;color:#1f1f1f;font-weight:400;letter-spacing:0px;">true</div>
</div>
<div class="a" style="left:526px;top:704px;width:1px;height:26px;background:#dcdfe3"></div>
<div class="a clip" style="left:371px;top:703px;width:155px;height:28px">
<div class="t" style="left:0px;top:7.89px;font-size:11px;color:#1f1f1f;font-weight:400;letter-spacing:-0.2px;">SYSTEM_CURRENT_FLAG</div>
</div>
<div class="a clip" style="left:739px;top:703px;width:188px;height:28px">
<div class="t" style="left:0px;top:8.89px;font-size:11px;color:#858585;font-weight:400;letter-spacing:0.1px;">VARCHAR</div>
</div>
<div class="a clip" style="left:1138px;top:703px;width:78px;height:28px">
<div class="t" style="left:0px;top:8.04px;font-size:12px;color:#1f1f1f;font-weight:400;letter-spacing:0px;">true</div>
</div>
<div class="a" style="left:326px;top:731px;width:1071px;height:28px;background:#fbfbfd"></div>
<div class="a" style="left:526px;top:732px;width:1px;height:26px;background:#dcdfe3"></div>
<div class="a clip" style="left:371px;top:731px;width:155px;height:28px">
<div class="t" style="left:0px;top:7.89px;font-size:11px;color:#1f1f1f;font-weight:400;letter-spacing:-0.2px;">SYSTEM_START_DATE</div>
</div>
<div class="a clip" style="left:539px;top:731px;width:187px;height:28px">
<div class="t" style="left:0px;top:8.59px;font-size:11px;color:#1f1f1f;font-weight:400;letter-spacing:-0.15px;">CAST(CURRENT_TIMESTAMP AS TIMESTAMP)</div>
</div>
<div class="a clip" style="left:739px;top:731px;width:188px;height:28px">
<div class="t" style="left:0px;top:8.89px;font-size:11px;color:#858585;font-weight:400;letter-spacing:0.1px;">TIMESTAMP</div>
</div>
<div class="a clip" style="left:1138px;top:731px;width:78px;height:28px">
<div class="t" style="left:0px;top:8.04px;font-size:12px;color:#1f1f1f;font-weight:400;letter-spacing:0px;">true</div>
</div>
<div class="a" style="left:326px;top:761px;width:1071px;height:1px;background:#c9cdd3"></div>
<div class="t" style="left:1327.5px;top:772.58px;font-size:11.6px;color:#9a9a9a;font-weight:400;letter-spacing:0px;">Rows:</div>
<div class="t" style="left:1363px;top:771.99px;font-size:12.3px;color:#111;font-weight:700;letter-spacing:0px;-webkit-text-stroke:0.05px currentColor;">23</div>
<div class="a" style="left:1397px;top:49px;width:5px;height:738px;background:#ececec"></div>
<div class="a" style="left:1402px;top:49px;width:457px;height:738px;background:#fff"></div>
<svg class="a" style="left:1410px;top:68px" width="16" height="16" viewBox="0 0 16 16" fill="none" stroke="#1b5596" stroke-width="1.15"><rect x="1.6" y="1.5" width="12.8" height="13.1"/><path d="M5.4 3.5v9M10.4 3.5v9"/><circle cx="5.4" cy="9.3" r="1.3" fill="#fff"/><circle cx="10.4" cy="6.4" r="1.3" fill="#fff"/></svg>
<div class="t" style="left:1434px;top:69.65px;font-size:14px;color:#1b5596;font-weight:700;letter-spacing:0px;-webkit-text-stroke:0.05px currentColor;">Config</div>
<svg class="a" style="left:1510px;top:68px" width="16" height="16" viewBox="0 0 16 16" fill="none" stroke="#333" stroke-width="1.4" stroke-linejoin="round"><path d="M3.2 11.5l.4-2.6L10 2.5 12.6 5.1 6.2 11.3z"/><path d="M1 14.5h13.9"/></svg>
<div class="t" style="left:1534px;top:69.14px;font-size:14.6px;color:#222;font-weight:400;letter-spacing:0px;">Column Editor</div>
<svg class="a" style="left:1652px;top:62px" width="30" height="30" viewBox="0 0 30 30" fill="none" stroke="#1a1a1a" stroke-width="1.2" stroke-linejoin="round" stroke-linecap="round"><path d="M10.4 7.4H19.4"/><path d="M12.4 7.4V11.6L8.9 20.4H21.3L17.7 11.6V7.4"/><path d="M10.4 17.6C12.2 18.9 13.8 17.9 15.4 17.2C16.8 16.6 18.3 16.3 19.6 16.2"/><circle cx="15.5" cy="13.2" r=".45" fill="#1a1a1a"/></svg>
<div class="t" style="left:1684px;top:68.97px;font-size:14.8px;color:#222;font-weight:400;letter-spacing:0px;">Testing</div>
<div class="a" style="left:1402px;top:94px;width:457px;height:1px;background:#ececec"></div>
<div class="a" style="left:1402px;top:95px;width:457px;height:93px;background:#fafafa"></div>
<div class="a" style="left:1410px;top:93px;width:68px;height:2px;background:#1b5596"></div>
<div class="a" style="left:1402px;top:141px;width:457px;height:1px;background:#e3e3e3"></div>
<div class="a" style="left:1402px;top:188px;width:457px;height:1px;background:#e3e3e3"></div>
<svg class="a" style="left:1420px;top:113px" width="7" height="11" viewBox="0 0 7 11"><path d="M1.2 1.2L5.2 5.2L1.2 9.2" fill="none" stroke="#666" stroke-width="1.1"/></svg>
<div class="t" style="left:1442px;top:110.96px;font-size:14.7px;color:#222;font-weight:400;letter-spacing:0px;">Node Properties</div>
<svg class="a" style="left:1418px;top:161px" width="12" height="8" viewBox="0 0 12 8"><path d="M1 1l5 5.5L11 1" fill="none" stroke="#333" stroke-width="1.2"/></svg>
<svg class="a" style="left:1420px;top:113px" width="9" height="11" viewBox="0 0 9 11"><path d="M1.5 1l5 4.5-5 4.5" fill="none" stroke="#333" stroke-width="1.2"/></svg>
<div class="t" style="left:1442px;top:158.14px;font-size:14.6px;color:#222;font-weight:400;letter-spacing:0px;">Options</div>
<div class="t" style="left:1418px;top:207.92px;font-size:12.5px;color:#222;font-weight:400;letter-spacing:0px;">Create As</div>
<div class="t" style="left:1477.3px;top:208.62px;font-size:12.5px;color:#f0283c;font-weight:400;letter-spacing:0px;">*</div>
<div class="a" style="left:1418px;top:232px;width:426px;height:32px;background:#fff;border:1px solid #d9d9d9;border-radius:6px"></div>
<div class="t" style="left:1430px;top:240.76px;font-size:14.7px;color:#222;font-weight:400;letter-spacing:0px;">table</div>
<svg class="a" style="left:1821px;top:243px" width="12" height="9" viewBox="0 0 12 9"><path d="M1 1.5l5 6 5-6" fill="none" stroke="#b5b5b5" stroke-width="1.1"/></svg>
<div class="t" style="left:1418px;top:301.29px;font-size:12.3px;color:#222;font-weight:400;letter-spacing:0px;">Business Key</div>
<div class="a" style="left:1757px;top:296px;width:87px;height:24px;background:#fff;border:1px solid #d9d9d9;border-radius:5px"></div>
<svg class="a" style="left:1765px;top:302px" width="13" height="13" viewBox="0 0 13 13"><path d="M2.5 10.5L5.5 7.5M7.5 5.5L10.5 2.5" stroke="#1a1a1a" stroke-width="1.5"/><path d="M0.8 12.2V8.6L4.4 12.2z M12.2 0.8H8.6L12.2 4.4z" fill="#1a1a1a"/></svg>
<div class="t" style="left:1787px;top:300.78px;font-size:14.2px;color:#222;font-weight:400;letter-spacing:0px;">Expand</div>
<div class="a clip" style="left:1418px;top:328px;width:193px;height:195px;border:1px solid #d9d9d9;border-bottom:none;border-radius:7px 7px 0 0;background:#fff"></div>
<div class="a" style="left:1423px;top:527px;width:183px;height:1px;background:#e3e3e3"></div>
<div class="a" style="left:1419px;top:368px;width:191px;height:1px;background:#efefef"></div>
<div class="a" style="left:1431px;top:340px;width:16px;height:16px;background:#fff;border:1px solid #d9d9d9;border-radius:3px"></div>
<svg class="a" style="left:1452px;top:345px" width="10" height="8" viewBox="0 0 10 8"><path d="M1 1.5l4 4.5 4-4.5" fill="none" stroke="#222" stroke-width="1.2"/></svg>
<div class="t" style="left:1467px;top:341.48px;font-size:14.2px;color:#222;font-weight:400;letter-spacing:0px;">14 items</div>
<div class="a" style="left:1431px;top:381px;width:167px;height:32px;background:#fff;border:1px solid #d9d9d9;border-radius:6px"></div>
<svg class="a" style="left:1444px;top:391px" width="13" height="13" viewBox="0 0 13 13" fill="none" stroke="#bbb" stroke-width="1.3"><circle cx="5.3" cy="5.3" r="4.3"/><path d="M8.5 8.5l4 4"/></svg>
<div class="t" style="left:1461.5px;top:390.40px;font-size:14.3px;color:#bdbdbd;font-weight:400;letter-spacing:0px;">Search here</div>
<div class="a" style="left:1431px;top:433px;width:16px;height:16px;background:#fff;border:1px solid #d9d9d9;border-radius:3px"></div>
<div class="t" style="left:1455px;top:434.68px;font-size:11.6px;color:#222;font-weight:400;letter-spacing:0px;">_meta/op</div>
<div class="a" style="left:1431px;top:465px;width:16px;height:16px;background:#fff;border:1px solid #d9d9d9;border-radius:3px"></div>
<div class="t" style="left:1455px;top:467.19px;font-size:11px;color:#222;font-weight:400;letter-spacing:-0.2px;">CUSTOMER_ID</div>
<div class="a" style="left:1431px;top:497px;width:16px;height:16px;background:#fff;border:1px solid #d9d9d9;border-radius:3px"></div>
<div class="t" style="left:1455px;top:499.19px;font-size:11px;color:#222;font-weight:400;letter-spacing:-0.2px;">ORDER_TS</div>
<div class="a clip" style="left:1651px;top:328px;width:193px;height:195px;border:1px solid #d9d9d9;border-bottom:none;border-radius:7px 7px 0 0;background:#fff"></div>
<div class="a" style="left:1656px;top:527px;width:183px;height:1px;background:#e3e3e3"></div>
<div class="a" style="left:1652px;top:368px;width:191px;height:1px;background:#efefef"></div>
<div class="a" style="left:1664px;top:340px;width:16px;height:16px;background:#fff;border:1px solid #d9d9d9;border-radius:3px"></div>
<svg class="a" style="left:1685px;top:345px" width="10" height="8" viewBox="0 0 10 8"><path d="M1 1.5l4 4.5 4-4.5" fill="none" stroke="#222" stroke-width="1.2"/></svg>
<div class="t" style="left:1700px;top:341.48px;font-size:14.2px;color:#222;font-weight:400;letter-spacing:0px;">2 items</div>
<div class="a" style="left:1664px;top:381px;width:167px;height:32px;background:#fff;border:1px solid #d9d9d9;border-radius:6px"></div>
<svg class="a" style="left:1677px;top:391px" width="13" height="13" viewBox="0 0 13 13" fill="none" stroke="#bbb" stroke-width="1.3"><circle cx="5.3" cy="5.3" r="4.3"/><path d="M8.5 8.5l4 4"/></svg>
<div class="t" style="left:1694.5px;top:390.40px;font-size:14.3px;color:#bdbdbd;font-weight:400;letter-spacing:0px;">Search here</div>
<div class="a" style="left:1664px;top:433px;width:16px;height:16px;background:#fff;border:1px solid #d9d9d9;border-radius:3px"></div>
<div class="t" style="left:1688px;top:435.19px;font-size:11px;color:#222;font-weight:400;letter-spacing:-0.2px;">ORDER_DETAIL_ID</div>
<div class="a" style="left:1664px;top:465px;width:16px;height:16px;background:#fff;border:1px solid #d9d9d9;border-radius:3px"></div>
<div class="t" style="left:1688px;top:467.19px;font-size:11px;color:#222;font-weight:400;letter-spacing:-0.2px;">ORDER_ID</div>
<div class="a" style="left:1619px;top:402px;width:24px;height:24px;background:#f5f5f5;border:1px solid #d9d9d9;border-radius:4px"></div>
<div class="a" style="left:1619px;top:430px;width:24px;height:24px;background:#f5f5f5;border:1px solid #d9d9d9;border-radius:4px"></div>
<svg class="a" style="left:1626px;top:408px" width="10" height="12" viewBox="0 0 10 12"><path d="M2 1.5l5 4.5-5 4.5" fill="none" stroke="#b8b8b8" stroke-width="1.2"/></svg>
<svg class="a" style="left:1626px;top:436px" width="10" height="12" viewBox="0 0 10 12"><path d="M8 1.5L3 6l5 4.5" fill="none" stroke="#b8b8b8" stroke-width="1.2"/></svg>
<div class="t" style="left:1418px;top:562.83px;font-size:12.6px;color:#222;font-weight:400;letter-spacing:0px;">Multi Source</div>
<div class="a" style="left:1418px;top:588px;width:44px;height:22px;background:#bfbfbf;border-radius:11px"></div>
<div class="a" style="left:1420px;top:590px;width:18px;height:18px;background:#fff;border-radius:9px;box-shadow:0 1px 2px rgba(0,0,0,.2)"></div>
<div class="t" style="left:1418px;top:644.73px;font-size:12.6px;color:#222;font-weight:400;letter-spacing:0px;">Enable Tests</div>
<div class="a" style="left:1418px;top:670px;width:44px;height:22px;background:#2f72f6;border-radius:11px"></div>
<div class="a" style="left:1442px;top:672px;width:18px;height:18px;background:#fff;border-radius:9px"></div>
<div class="t" style="left:1418px;top:729.03px;font-size:12.6px;color:#222;font-weight:400;letter-spacing:0px;">Pre-SQL</div>
<div class="a" style="left:1757px;top:724px;width:87px;height:24px;background:#fff;border:1px solid #d9d9d9;border-radius:5px"></div>
<svg class="a" style="left:1765px;top:730px" width="13" height="13" viewBox="0 0 13 13"><path d="M2.5 10.5L5.5 7.5M7.5 5.5L10.5 2.5" stroke="#1a1a1a" stroke-width="1.5"/><path d="M0.8 12.2V8.6L4.4 12.2z M12.2 0.8H8.6L12.2 4.4z" fill="#1a1a1a"/></svg>
<div class="t" style="left:1787px;top:728.78px;font-size:14.2px;color:#222;font-weight:400;letter-spacing:0px;">Expand</div>
<div class="a" style="left:1418px;top:756px;width:426px;height:31px;background:#fff;border:1px solid #ececec;border-top:2px solid #ebebeb;border-bottom:none"></div>
<div class="a" style="left:1458px;top:758px;width:384px;height:17px;background:#fdfdfc;border:2px solid #ebebeb;border-top:none;border-left:none"></div>
<div class="t" style="left:1434px;top:759.64px;font-size:12px;color:#1e2a7a;font-weight:400;letter-spacing:0px;font-family:"Liberation Mono",monospace">1</div>
<div class="a" style="left:1829px;top:757px;width:14px;height:2px;background:#333"></div>
<div class="a" style="left:1829px;top:759px;width:1px;height:28px;background:#d0d0d0"></div></body></html>
